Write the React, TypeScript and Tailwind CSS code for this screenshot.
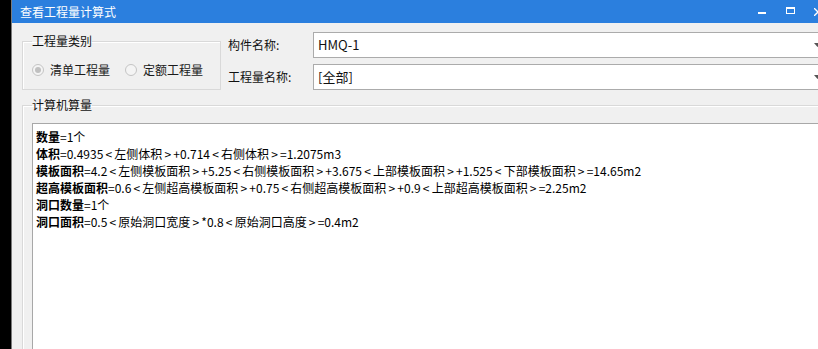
const lines: { label: string; value: string }[] = [
  { label: '数量', value: '=1个' },
  { label: '体积', value: '=0.4935<左侧体积>+0.714<右侧体积>=1.2075m3' },
  {
    label: '模板面积',
    value: '=4.2<左侧模板面积>+5.25<右侧模板面积>+3.675<上部模板面积>+1.525<下部模板面积>=14.65m2',
  },
  {
    label: '超高模板面积',
    value: '=0.6<左侧超高模板面积>+0.75<右侧超高模板面积>+0.9<上部超高模板面积>=2.25m2',
  },
  { label: '洞口数量', value: '=1个' },
  { label: '洞口面积', value: '=0.5<原始洞口宽度>*0.8<原始洞口高度>=0.4m2' },
];

// YaHei draws < and > in a wide cell, so give them one
function Formula({ text }: { text: string }) {
  const parts = text.split(/([<>])/);
  return (
    <>
      {parts.map((p, i) =>
        p === '<' || p === '>' ? (
          <span key={i} className="inline-block w-[11px] text-center">
            {p}
          </span>
        ) : (
          <span key={i}>{p}</span>
        ),
      )}
    </>
  );
}

function Radio({ checked, label }: { checked?: boolean; label: string }) {
  return (
    <label className="flex items-center gap-[6px]">
      <span className="flex h-[12px] w-[12px] items-center justify-center rounded-full border border-[#c4c4c4] bg-[#f4f4f4]">
        {checked && <span className="h-[6px] w-[6px] rounded-full bg-[#c0c0c0]" />}
      </span>
      <span className="text-[12px] text-[#1a1a1a]">{label}</span>
    </label>
  );
}

function Combo({ value }: { value: string }) {
  return (
    <div className="flex h-[26px] flex-1 items-center border border-[#ababab] bg-white pl-[4px] pr-[9px]">
      <span className="flex-1 text-[13px] text-[#111]">{value}</span>
      <svg width="7" height="4" viewBox="0 0 7 4" className="fill-[#555]">
        <path d="M0 0h7L3.5 4z" />
      </svg>
    </div>
  );
}

export default function App() {
  return (
    <div
      className="flex h-[349px] w-[818px] overflow-hidden bg-black"
      style={{ fontFamily: '"Noto Sans CJK SC", "Noto Sans", sans-serif' }}
    >
      <div className="w-[11px] shrink-0" />
      <div className="flex w-[830px] shrink-0 flex-col border-l border-[#7a7a7a] bg-[#f0f0f0]">
        <header className="flex h-[23px] shrink-0 items-center bg-[#2b7fde] pl-[8px] pr-[9px] text-white">
          <span className="text-[12px] leading-none">查看工程量计算式</span>
          <div className="ml-auto flex">
            <span className="flex h-[23px] w-[28px] items-center justify-center pt-[2px]">
              <span className="h-[2px] w-[8px] bg-white" />
            </span>
            <span className="flex h-[23px] w-[28px] items-center justify-center pb-[2px]">
              <span className="h-[7px] w-[9px] border border-t-2 border-white" />
            </span>
            <span className="flex h-[23px] w-[28px] items-center justify-center">
              <svg width="8" height="8" viewBox="0 0 8 8" className="stroke-white" strokeWidth="1.3">
                <path d="M0 0l8 8M8 0L0 8" />
              </svg>
            </span>
          </div>
        </header>

        <div className="flex flex-1 flex-col pl-[10px] pr-[10px] pt-[9px]">
          <div className="flex gap-[7px]">
            <fieldset className="mt-[1px] h-[57px] w-[199px] shrink-0 border border-[#d9d9d9] pl-[9px] shadow-[inset_1px_1px_0_#fff]">
              <legend className="px-0 text-[12px] leading-[16px] text-[#111]">工程量类别</legend>
              <div className="flex gap-[15px] pl-[-1px] pt-[12px]">
                <Radio checked label="清单工程量" />
                <Radio label="定额工程量" />
              </div>
            </fieldset>
            <div className="flex flex-1 flex-col gap-[6px]">
              <div className="flex items-center">
                <span className="w-[85px] text-[12px] text-[#111]">构件名称:</span>
                <Combo value="HMQ-1" />
              </div>
              <div className="flex items-center">
                <span className="w-[85px] text-[12px] text-[#111]">工程量名称:</span>
                <Combo value="[全部]" />
              </div>
            </div>
          </div>

          <fieldset className="mt-[7px] flex-1 border border-[#d9d9d9] pl-[9px] pr-[8px] shadow-[inset_1px_1px_0_#fff]">
            <legend className="px-0 text-[12px] leading-[16px] text-[#111]">计算机算量</legend>
            <div className="mt-[10px] h-[300px] border border-[#a8a8a8] border-r-[#d4d4d4] bg-white pl-[3px] pt-[4px] text-[12px] leading-[17px] text-black">
              {lines.map((l) => (
                <div key={l.label} className="whitespace-nowrap">
                  <span className="font-bold">{l.label}</span>
                  <Formula text={l.value} />
                </div>
              ))}
            </div>
          </fieldset>
        </div>
      </div>
    </div>
  );
}
